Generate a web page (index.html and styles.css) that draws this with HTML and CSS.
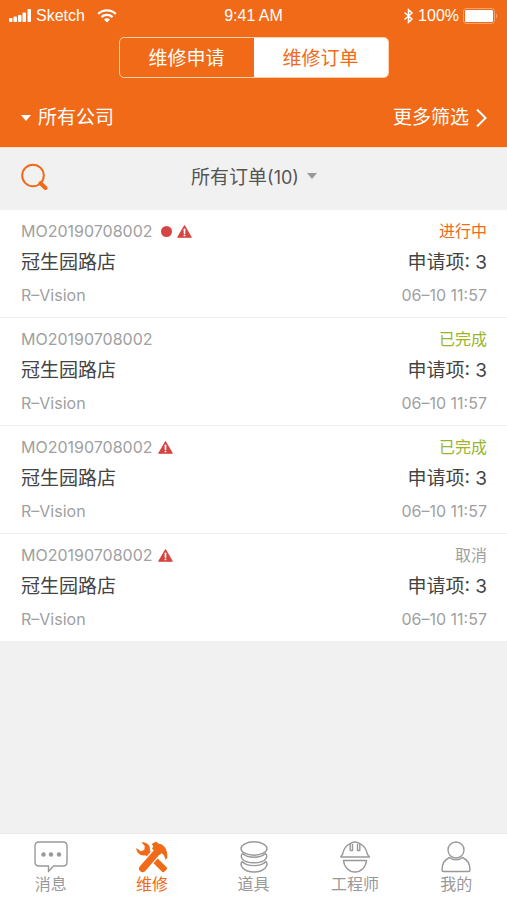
FILE: index.html
```html
<!DOCTYPE html>
<html lang="zh-CN">
<head>
<meta charset="utf-8">
<meta name="viewport" content="width=device-width, initial-scale=1">
<title>维修订单</title>
<link rel="stylesheet" href="styles.css">
</head>
<body>
<svg class="sprite" aria-hidden="true">
  <symbol id="warn" viewBox="0 0 16 14">
    <path d="M8 .8 15.2 13.2H.8Z" fill="#d64541" stroke="#d64541" stroke-width="1.2" stroke-linejoin="round"/>
    <path d="M8 4.6V8.8" stroke="#fff" stroke-width="1.8" stroke-linecap="round"/>
    <circle cx="8" cy="11.2" r="1" fill="#fff"/>
  </symbol>
</svg>
<header class="header">
  <div class="status-bar">
    <div class="status-left">
      <svg width="24" height="14" viewBox="0 0 24 14" fill="#fff" aria-hidden="true">
        <rect x="1" y="9" width="3.500" height="4" rx="1"/><rect x="5.500" y="7.500" width="3.500" height="5.500" rx="1"/><rect x="10" y="6" width="3.500" height="7" rx="1"/><rect x="14.500" y="3.500" width="3.500" height="9.500" rx="1"/><rect x="19.500" y="0" width="3.500" height="13" rx="1"/>
      </svg>
      <span class="carrier">Sketch</span>
      <svg width="20" height="14" viewBox="0 0 20 14" aria-hidden="true">
        <path d="M1.200 4.900C6.200.2 13.800.2 18.800 4.900M4.400 8.100C7.600 5.200 12.400 5.200 15.600 8.100" fill="none" stroke="#fff" stroke-width="2.300"/>
        <path d="M10 13.500 6.900 10.400C8.600 8.900 11.400 8.900 13.100 10.400Z" fill="#fff"/>
      </svg>
    </div>
    <span>9:41 AM</span>
    <div class="status-right">
      <svg width="11" height="16" viewBox="0 0 11 16" aria-hidden="true"><path d="M1.500 4.500 9 11 5.500 14.200V1.800L9 5 1.500 11.500" fill="none" stroke="#fff" stroke-width="1.500"/></svg>
      <span>100%</span>
      <svg width="36" height="16" viewBox="0 0 36 16" aria-hidden="true">
        <rect x=".5" y=".5" width="31" height="15" rx="3" fill="none" stroke="#fff" stroke-opacity=".4"/>
        <rect x="2" y="2" width="28" height="12" rx="1.500" fill="#fff"/>
        <path d="M33 5.500Q35.500 8 33 10.500Z" fill="#fff" fill-opacity=".4"/>
      </svg>
    </div>
  </div>
  <nav class="segmented">
    <button class="segment" type="button">维修申请</button>
    <button class="segment segment-active" type="button">维修订单</button>
  </nav>
  <div class="filters">
    <button class="filter" type="button">
      <svg width="10" height="6" viewBox="0 0 10 6" aria-hidden="true"><path d="M0 0H10L5 6Z" fill="#fff"/></svg>
      所有公司
    </button>
    <button class="filter" type="button">
      更多筛选
      <svg width="11" height="20" viewBox="0 0 11 20" aria-hidden="true"><path d="M1 1.500 9.500 10 1 18.500" fill="none" stroke="#fff" stroke-width="2"/></svg>
    </button>
  </div>
</header>
<div class="toolbar">
  <button class="search" type="button" aria-label="搜索">
    <svg width="27" height="28" viewBox="0 0 27 28" aria-hidden="true"><circle cx="12" cy="12.500" r="10.800" fill="none" stroke="#f06a18" stroke-width="2"/><path d="m19.500 20.200 5 4.800" stroke="#f06a18" stroke-width="4" stroke-linecap="round"/></svg>
  </button>
  <button class="order-filter" type="button">
    <span>所有订单<span class="count">(10)</span></span>
    <svg width="10" height="6" viewBox="0 0 10 6" aria-hidden="true"><path d="M0 0H10L5 6Z" fill="#999"/></svg>
  </button>
</div>
<main class="content">
  <ul class="orders">
    <li class="order">
      <div class="line meta"><span class="code">MO20190708002 <i class="dot"></i><svg class="warn" role="img" aria-label="警告"><use href="#warn"/></svg></span><span class="running">进行中</span></div>
      <div class="line main"><span>冠生园路店</span><span>申请项: 3</span></div>
      <div class="line meta"><span>R–Vision</span><time>06–10 11:57</time></div>
    </li>
    <li class="order">
      <div class="line meta"><span class="code">MO20190708002</span><span class="done">已完成</span></div>
      <div class="line main"><span>冠生园路店</span><span>申请项: 3</span></div>
      <div class="line meta"><span>R–Vision</span><time>06–10 11:57</time></div>
    </li>
    <li class="order">
      <div class="line meta"><span class="code">MO20190708002 <svg class="warn" role="img" aria-label="警告"><use href="#warn"/></svg></span><span class="done">已完成</span></div>
      <div class="line main"><span>冠生园路店</span><span>申请项: 3</span></div>
      <div class="line meta"><span>R–Vision</span><time>06–10 11:57</time></div>
    </li>
    <li class="order">
      <div class="line meta"><span class="code">MO20190708002 <svg class="warn" role="img" aria-label="警告"><use href="#warn"/></svg></span><span>取消</span></div>
      <div class="line main"><span>冠生园路店</span><span>申请项: 3</span></div>
      <div class="line meta"><span>R–Vision</span><time>06–10 11:57</time></div>
    </li>
  </ul>
</main>
<nav class="tabs">
  <a class="tab" href="#messages">
    <svg class="tab-icon" viewBox="0 0 34 32" aria-hidden="true"><path d="M5 1H29Q33 1 33 5V21Q33 25 29 25H19.500L14.500 30.500V25H5Q1 25 1 21V5Q1 1 5 1Z"/><g fill="#999" stroke="none"><circle cx="9.500" cy="13.500" r="2.200"/><circle cx="17" cy="13.500" r="2.200"/><circle cx="25" cy="13.500" r="2.200"/></g></svg>
    消息
  </a>
  <a class="tab tab-active" href="#repair" aria-current="page">
    <svg class="tab-icon" viewBox="0 0 34 32" aria-hidden="true">
      <path d="M6.500 1.300C11.500.4 16.200 4.500 14.800 9.800L31.600 26.200Q32.600 27.400 31.600 28.600L29.300 30.800Q28 31.700 26.800 30.600L10.500 14.200C6 15.500 1.200 12 1.300 7L5.800 10.300 9.300 9 9.800 5.200Z" fill="#f06a18" stroke="none"/>
      <path d="M22 11 7.500 27.500" stroke="#fff" stroke-width="9.500"/>
      <path d="M22.500 10.500 7.600 27.600" stroke="#f06a18" stroke-width="7" stroke-linecap="round"/>
      <path d="M16.800 3 20.500.8Q22.200 1 23.200 2.400C29 3 33 8.500 32.300 16.800L30.500 19Q29.700 14 26.500 12.300L24.500 14 17 7.800 18.200 5.600Z" fill="#f06a18" stroke="none"/>
    </svg>
    维修
  </a>
  <a class="tab" href="#parts">
    <svg class="tab-icon" viewBox="0 0 34 32" aria-hidden="true"><ellipse cx="17" cy="7.500" rx="13" ry="6.700"/><path d="M5.500 12.500C2.500 15 4.500 21.800 17 21.800S31.500 15 28.500 12.500C23 17.500 11 17.500 5.500 12.500ZM5.200 20.500C2 24 6 31 17 31S32 24 28.800 20.500C24 26 10 26 5.200 20.500Z"/></svg>
    道具
  </a>
  <a class="tab" href="#engineers">
    <svg class="tab-icon" viewBox="0 0 34 32" aria-hidden="true"><path d="M2.500 16H31.500L29.500 13.500C28.500 8.500 26 4.500 21.800 2.700V9.500H19.500V3M4.500 13.500 2.500 16M4.500 13.500C5.500 8.500 8 4.500 12.200 2.700V9.500H14.500V3M12.200 2.700Q17-.6 21.800 2.700"/><path d="M5.500 19.500H28.500C28 26 23 31 17 31S6 26 5.500 19.500Z"/></svg>
    工程师
  </a>
  <a class="tab" href="#me">
    <svg class="tab-icon" viewBox="0 0 34 32" aria-hidden="true"><circle cx="17" cy="9" r="8"/><path d="M10.500 16.500C6 18.500 3 23 3 29Q3 30.500 4.500 30.500H29.500Q31 30.500 31 29C31 23 28 18.500 23.500 16.500C20 19.700 14 19.700 10.500 16.500Z"/></svg>
    我的
  </a>
</nav>
</body>
</html>
```
FILE: styles.css
```css
* {
  box-sizing: border-box;
}

body {
  margin: 0;
  min-height: 100vh;
  display: flex;
  flex-direction: column;
  background: #f1f1f1;
  color: #444;
  font-family: "Liberation Sans", "Noto Sans CJK SC", sans-serif;
  font-size: 16px;
}

button {
  font: inherit;
  color: inherit;
  background: none;
  border: 0;
  padding: 0;
  cursor: pointer;
}

svg {
  display: block;
  flex: none;
}

.sprite {
  position: absolute;
  width: 0;
  height: 0;
}

.header {
  background: #f06a18;
  color: #fff;
  border-bottom: 1px solid #ffe0c0;
}

.status-bar {
  display: grid;
  grid-template-columns: 1fr auto 1fr;
  align-items: center;
  height: 31px;
  padding: 0 8px;
}

.status-left,
.status-right {
  display: flex;
  align-items: center;
  gap: 4px;
}

.status-right {
  justify-content: flex-end;
}

.carrier {
  margin-right: 8px;
}

.segmented {
  display: flex;
  width: 270px;
  height: 41px;
  margin: 6px auto 0;
  border: 1px solid #ffd0b0;
  border-radius: 5px;
  overflow: hidden;
}

.segment {
  flex: 1;
  padding-bottom: 2px;
  font-size: 19px;
}

.segment-active {
  background: #fff;
  color: #f06a18;
}

.filters {
  display: flex;
  justify-content: space-between;
  padding: 25px 20px 14px 21px;
}

.filter {
  display: flex;
  align-items: center;
  gap: 7px;
  font-size: 19px;
  line-height: 30px;
}

.toolbar {
  display: grid;
  grid-template-columns: 1fr auto 1fr;
  align-items: center;
  height: 62px;
  padding: 0 20px 4px 21px;
}

.search {
  justify-self: start;
}

.order-filter {
  display: flex;
  align-items: center;
  gap: 8px;
  padding-bottom: 3px;
  font-size: 19px;
  color: #555;
}

.count {
  font-family: Inter, sans-serif;
  font-size: 18px;
}

.content {
  flex: 1;
}

.orders {
  margin: 0;
  padding: 0;
  list-style: none;
  background: #fff;
}

.order {
  padding: 5px 20px 6px 21px;
  border-bottom: 1px solid #f1f1f1;
}

.line {
  display: flex;
  justify-content: space-between;
  align-items: center;
  height: 32px;
  line-height: 32px;
}

.meta {
  color: #a0a0a0;
  font-family: Inter, "Noto Sans CJK SC", sans-serif;
  font-size: 16px;
}

.main {
  font-family: Inter, "Noto Sans CJK SC", sans-serif;
  font-size: 19px;
}

.code {
  display: flex;
  align-items: center;
  gap: 5px;
}

.dot {
  width: 11px;
  height: 11px;
  margin-left: 3px;
  border-radius: 50%;
  background: #d64541;
}

.warn {
  width: 15px;
  height: 13px;
}

.running {
  color: #f06a18;
}

.done {
  color: #9ab52c;
}

.tabs {
  display: flex;
  height: 67px;
  background: #fff;
  border-top: 1px solid #eaeaea;
}

.tab {
  flex: 1;
  display: flex;
  flex-direction: column;
  align-items: center;
  padding-top: 7px;
  color: #999;
  text-decoration: none;
  line-height: 24px;
}

.tab-active {
  color: #f06a18;
}

.tab-icon {
  width: 34px;
  height: 32px;
  fill: none;
  stroke: #999;
  stroke-width: 1.4;
  stroke-linejoin: round;
}
```
